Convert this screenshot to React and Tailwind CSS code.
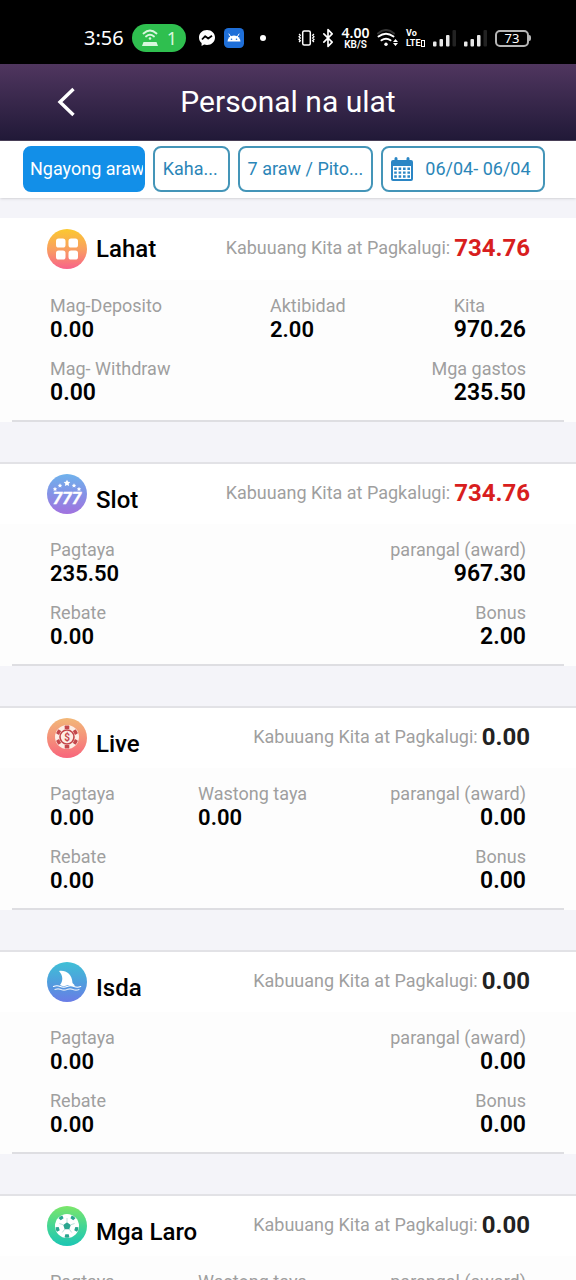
import { useId } from 'react';
import { Bluetooth } from 'lucide-react';

const GROUPS = [
  {
    id: 'all',
    title: 'Lahat',
    total: '734.76',
    rows: [
      [
        { label: 'Mag-Deposito', value: '0.00' },
        { label: 'Aktibidad', value: '2.00' },
        { label: 'Kita', value: '970.26', size: 'lg' },
      ],
      [
        { label: 'Mag- Withdraw', value: '0.00', size: 'lg' },
        { label: 'Mga gastos', value: '235.50', size: 'lg', align: 'right' },
      ],
    ],
  },
  {
    id: 'slot',
    title: 'Slot',
    total: '734.76',
    rows: [
      [
        { label: 'Pagtaya', value: '235.50' },
        { label: 'parangal (award)', value: '967.30', size: 'lg', align: 'right' },
      ],
      [
        { label: 'Rebate', value: '0.00' },
        { label: 'Bonus', value: '2.00', size: 'lg', align: 'right' },
      ],
    ],
  },
  {
    id: 'live',
    title: 'Live',
    total: '0.00',
    rows: [
      [
        { label: 'Pagtaya', value: '0.00' },
        { label: 'Wastong taya', value: '0.00' },
        { label: 'parangal (award)', value: '0.00', size: 'lg', align: 'right' },
      ],
      [
        { label: 'Rebate', value: '0.00' },
        { label: 'Bonus', value: '0.00', size: 'lg', align: 'right' },
      ],
    ],
  },
  {
    id: 'fish',
    title: 'Isda',
    total: '0.00',
    rows: [
      [
        { label: 'Pagtaya', value: '0.00' },
        { label: 'parangal (award)', value: '0.00', size: 'lg', align: 'right' },
      ],
      [
        { label: 'Rebate', value: '0.00' },
        { label: 'Bonus', value: '0.00', size: 'lg', align: 'right' },
      ],
    ],
  },
  {
    id: 'sports',
    title: 'Mga Laro',
    total: '0.00',
    rows: [
      [
        { label: 'Pagtaya', value: '0.00' },
        { label: 'Wastong taya', value: '0.00' },
        { label: 'parangal (award)', value: '0.00', size: 'lg', align: 'right' },
      ],
      [
        { label: 'Rebate', value: '0.00' },
        { label: 'Bonus', value: '0.00', size: 'lg', align: 'right' },
      ],
    ],
  },
];

const ICON_COLORS = {
  all: ['#fbc92f', '#f9a060', '#f8628a'],
  slot: ['#6fb2ec', '#8492e6', '#a172df'],
  live: ['#f2b878', '#f5917a', '#f8657c'],
  fish: ['#3fc0d6', '#4f9fdd', '#6a7ce6'],
  sports: ['#7be66a', '#45d694', '#1cc6b4'],
};

const TILES = [[9, 9.5], [21.5, 9.5], [9, 21.5], [21.5, 21.5]];
const STARS = [[8, 15, 2], [13, 11.5, 2], [20, 9, 3], [27, 11.5, 2], [32, 15, 2]];
const SPOKES = [0, 60, 120, 180, 240, 300];
const PATCHES = [36, 108, 180, 252, 324];

function GroupArt({ id }) {
  if (id === 'all') {
    return TILES.map(([x, y]) => (
      <rect key={`${x}-${y}`} x={x} y={y} width="9.500" height="9" rx="2.600" fill="#fff" />
    ));
  }
  if (id === 'slot') {
    return (
      <g fill="#fff">
        {STARS.map(([x, y, r]) => (
          <path
            key={x}
            transform={`translate(${x} ${y}) scale(${r / 2})`}
            d="M0-2.2 .7-.8 2.2-.6 1.1.5 1.4 2 0 1.3-1.4 2-1.1.5-2.2-.6-.7-.8Z"
          />
        ))}
        <text
          x="20" y="30" textAnchor="middle" fontSize="17" fontWeight="700" fontStyle="italic"
          fontFamily="Roboto, sans-serif" stroke="#fff" strokeWidth=".4"
        >
          777
        </text>
      </g>
    );
  }
  if (id === 'live') {
    return (
      <>
        <circle cx="20" cy="19" r="12" fill="#fdeee6" />
        {SPOKES.map((a) => (
          <rect
            key={a} x="17.7" y="7.6" width="4.6" height="3.4" rx=".6" fill="#c4474b"
            transform={`rotate(${a} 20 19)`}
          />
        ))}
        <circle cx="20" cy="19" r="7" fill="#fdeee6" stroke="#c4474b" strokeWidth="1.6" />
        <text
          x="20" y="22.6" textAnchor="middle" fontSize="10" fontWeight="700"
          fontFamily="Roboto, sans-serif" fill="#c4474b"
        >
          $
        </text>
      </>
    );
  }
  if (id === 'fish') {
    return (
      <>
        <path
          fill="#fff"
          d="M12 9c7-1 13 3 13.5 12l2.500 2.500c-3 .9-5 .9-7-.5-3 1.500-6 1.500-8 0 3-3.500 3.500-9-1-14Z"
        />
        <g fill="none" stroke="#fff" strokeWidth="1.200" strokeLinecap="round">
          <path d="M6.500 24.500q3.400-1.500 6.800 0t6.800 0 6.800 0 6.800 0" />
          <path d="M8 27.500q3-1.400 6 0t6 0 6 0 6 0" opacity=".8" />
        </g>
      </>
    );
  }
  return (
    <>
      <circle cx="20" cy="20" r="12" fill="#fff" />
      <g fill="#2aa58f">
        <path d="M20 16.2 23.7 18.9 22.3 23.2H17.7L16.3 18.9Z" />
        {PATCHES.map((a) => (
          <path key={a} d="M17.6 31.2 18.3 28.2H21.7L22.4 31.2Q20 32.2 17.6 31.2Z" transform={`rotate(${a + 36} 20 20)`} />
        ))}
      </g>
      <g stroke="#2aa58f" strokeWidth=".6" opacity=".5">
        {PATCHES.map((a) => (
          <path key={a} d="M20 24v4" transform={`rotate(${a} 20 20)`} />
        ))}
      </g>
    </>
  );
}

function GroupIcon({ id }) {
  const gradient = useId();
  const [from, mid, to] = ICON_COLORS[id];
  return (
    <svg viewBox="0 0 40 40" className="size-10 shrink-0" aria-hidden="true">
      <defs>
        <linearGradient id={gradient} x1="0" y1="0" x2="0" y2="1">
          <stop offset="0" stopColor={from} />
          <stop offset=".5" stopColor={mid} />
          <stop offset="1" stopColor={to} />
        </linearGradient>
      </defs>
      <circle cx="20" cy="20" r="20" fill={`url(#${gradient})`} />
      <GroupArt id={id} />
    </svg>
  );
}

function Signal() {
  return (
    <svg viewBox="0 0 24 18" className="h-[18px] w-6" fill="#e8e8e8" aria-hidden="true">
      <rect x="0" y="12.500" width="3.500" height="5" rx="1" />
      <rect x="6.500" y="10" width="3.500" height="7.500" rx="1" />
      <rect x="13" y="6" width="3.500" height="11.500" rx="1" />
      <rect x="19.500" y="1" width="3.500" height="16.500" rx="1" fill="#222" />
    </svg>
  );
}

function StatusBar() {
  return (
    <div className="flex h-16 shrink-0 items-center justify-between bg-black pt-3 pr-[45px] pl-[84px] font-['Noto_Sans',sans-serif] text-white">
      <div className="flex items-center gap-2">
        <span className="w-10 text-xl leading-7">3:56</span>
        <span className="flex h-7 w-[54px] items-center justify-center gap-2 rounded-full bg-[#2fbf4f] text-[#d9f7df]">
          <svg viewBox="0 0 18 18" className="size-[18px]" fill="none" stroke="currentColor" strokeWidth="1.800" strokeLinecap="round" aria-hidden="true">
            <path d="M2.500 4.500Q9-1.500 15.500 4.500M5 7.500q4-3.400 8 0" />
            <circle cx="9" cy="9.500" r="1.300" fill="currentColor" stroke="none" />
            <path d="M2.500 13h13l1.500 4H1Z" fill="currentColor" stroke="none" />
          </svg>
          <span className="text-lg leading-6">1</span>
        </span>
        <svg viewBox="0 0 18 18" className="ml-1 size-[18px]" aria-hidden="true">
          <path fill="#fff" d="M9 1C4.400 1 1 4.300 1 8.500c0 2.300 1 4.200 2.600 5.600V17l2.500-1.400c.9.3 1.900.4 2.900.4 4.600 0 8-3.300 8-7.500S13.600 1 9 1Z" />
          <path fill="none" stroke="#000" strokeWidth="1.800" strokeLinejoin="round" d="m4 10.500 3.200-3.400 3 2.400L14 6.800" />
        </svg>
        <svg viewBox="0 0 20 20" className="size-5" aria-hidden="true">
          <rect width="20" height="20" rx="4.500" fill="#1f6fd8" />
          <path fill="#fff" d="M3.500 13.500a6.500 6 0 0 1 13 0Z" />
          <path stroke="#fff" strokeWidth="1" strokeLinecap="round" d="m5 6 1.800 3M15 6l-1.800 3" />
          <circle cx="7.500" cy="11.300" r=".8" fill="#1f6fd8" />
          <circle cx="12.500" cy="11.300" r=".8" fill="#1f6fd8" />
        </svg>
        <span className="ml-2 size-1.5 rounded-full bg-white" />
      </div>

      <div className="flex items-center gap-[7px]">
        <svg viewBox="0 0 17 18" className="h-[18px] w-[17px]" fill="none" stroke="#fff" strokeWidth="1.500" aria-hidden="true">
          <rect x="4.700" y="2" width="7.600" height="14" rx="1.500" />
          <path strokeWidth="1.200" d="m1 5 1.400 1.300L1 7.700l1.400 1.300L1 10.400l1.400 1.300L1 13M16 5l-1.400 1.300L16 7.700 14.600 9 16 10.400l-1.400 1.300L16 13" />
        </svg>
        <span className="flex w-3 justify-center">
          <Bluetooth size={20} strokeWidth={2} className="shrink-0" />
        </span>
        <span className="flex w-[29px] flex-col items-center font-semibold">
          <span className="text-sm leading-[14px]">4.00</span>
          <span className="font-[Roboto,sans-serif] text-[10px] leading-[10px]">KB/S</span>
        </span>
        <svg viewBox="0 0 22 18" className="h-[18px] w-[22px]" fill="none" stroke="#fff" strokeWidth="2" strokeLinecap="round" aria-hidden="true">
          <path stroke="#333" d="M1 4.500Q9-2.500 17 4.500" />
          <path d="M1.500 7.500q7.500-5.600 15 0M4.500 11.300q4.500-3.200 9 0" />
          <circle cx="9" cy="15.200" r="1.700" fill="#fff" stroke="none" />
          <path fill="#fff" stroke="none" d="m18.500 10 2.500 3h-5ZM18.500 17l2.500-3h-5Z" />
        </svg>
        <span className="flex w-5 flex-col font-[Roboto,sans-serif] text-[9px] leading-[10px] font-bold">
          <span>Vo</span>
          <span className="flex items-center">
            LTE
            <span className="h-[7px] w-1 shrink-0 border border-white" />
          </span>
        </span>
        <Signal />
        <Signal />
        <span className="flex w-9 items-center">
          <span className="flex h-[17px] w-[34px] items-center justify-center rounded-[5px] border-2 border-[#b5b5b5] text-[13px] leading-3">73</span>
          <span className="h-1.5 w-0.5 rounded-r-sm bg-[#b5b5b5]" />
        </span>
      </div>
    </div>
  );
}

function Header() {
  return (
    <header className="grid h-[77px] shrink-0 grid-cols-[1fr_auto_1fr] items-center border-b border-[#4b4159] bg-linear-to-b from-[#50365f] to-[#211938] text-white">
      <button type="button" aria-label="Back" className="ml-14 w-5">
        <svg viewBox="0 0 20 30" className="h-[30px] w-5" fill="none" stroke="currentColor" strokeWidth="3.400" aria-hidden="true">
          <path d="M17.500 2 4 15l13.500 13" />
        </svg>
      </button>
      <h1 className="text-[30px] leading-9">Personal na ulat</h1>
    </header>
  );
}

function CalendarIcon() {
  return (
    <svg viewBox="0 0 22 24" className="h-6 w-[22px] shrink-0" aria-hidden="true">
      <path fill="#2b86c5" d="M2 3h1.500V1.500a1.500 1.500 0 0 1 3 0V3h9V1.500a1.500 1.500 0 0 1 3 0V3H20a2 2 0 0 1 2 2v17a2 2 0 0 1-2 2H2a2 2 0 0 1-2-2V5a2 2 0 0 1 2-2Z" />
      <path fill="#fff" d="M2 9h18v13H2Z" />
      <path stroke="#2b86c5" strokeWidth="2.400" strokeDasharray="2.600 1.800" d="M3.200 11.700h16M3.200 15.600h16M3.200 19.500h16" />
    </svg>
  );
}

const CHIP = 'h-[46px] min-w-0 overflow-hidden rounded-lg border-2 text-left text-lg leading-6 whitespace-nowrap';
const CHIP_IDLE = 'border-[#4495b8] bg-white pl-2 text-[#2b86b8]';

function Filters() {
  return (
    <nav className="grid h-[57px] shrink-0 grid-cols-[122fr_77fr_136fr_164fr] items-start gap-2 bg-white pt-[5px] pr-[31px] pl-[23px] shadow-sm">
      <button type="button" className={`${CHIP} border-[#128fe8] bg-[#128fe8] pl-[5px] text-white`}>
        Ngayong araw
      </button>
      <button type="button" className={`${CHIP} ${CHIP_IDLE}`}>Kaha...</button>
      <button type="button" className={`${CHIP} ${CHIP_IDLE}`}>7 araw / Pito...</button>
      <button type="button" className={`${CHIP} ${CHIP_IDLE} flex items-center gap-3`}>
        <CalendarIcon />
        06/04- 06/04
      </button>
    </nav>
  );
}

function Stat({ label, value, size, align }) {
  return (
    <div className={align === 'right' ? 'text-right' : 'text-left'}>
      <dt className="text-lg leading-6 text-[#9f9f9f]">{label}</dt>
      <dd className={`leading-6 font-semibold text-black ${size === 'lg' ? 'text-[23px]' : 'text-[22px]'}`}>
        {value}
      </dd>
    </div>
  );
}

function GroupCard({ group, first }) {
  const isPositive = Number(group.total) > 0;
  return (
    <section className={first ? 'bg-[#fdfdfd]' : 'border-t-2 border-[#e2e2e6] bg-[#fdfdfd]'}>
      <div className={`flex items-start justify-between bg-white pr-[46px] pl-[47px] ${first ? 'h-[62px] pt-[11px]' : 'h-[60px] pt-[10px]'}`}>
        <div className="flex items-start gap-[9px]">
          <GroupIcon id={group.id} />
          <h2 className={`text-2xl leading-8 font-medium text-black ${first ? 'pt-1' : 'pt-[10px]'}`}>
            {group.title}
          </h2>
        </div>
        <p className="flex items-center gap-1 pt-[5px] text-lg leading-7 text-[#9f9f9f]">
          Kabuuang Kita at Pagkalugi:
          <strong className={`text-2xl leading-7 font-bold ${isPositive ? 'text-[#d81e1e]' : 'text-[#222]'}`}>
            {group.total}
          </strong>
        </p>
      </div>

      <div className="mx-3 flex flex-col gap-[15px] border-b-2 border-[#dedee2] px-[38px] pt-[14px] pb-[15px]">
        {group.rows.map((row, i) => (
          <dl key={i} className="flex justify-between">
            {row.map((stat) => (
              <Stat key={stat.label} {...stat} />
            ))}
          </dl>
        ))}
      </div>
    </section>
  );
}

export default function App() {
  return (
    <div className="flex h-screen flex-col overflow-hidden bg-[#f4f4f9] font-[Roboto,sans-serif]">
      <StatusBar />
      <Header />
      <Filters />
      <main className="flex min-h-0 flex-1 flex-col gap-10 overflow-y-auto pt-5 [scrollbar-width:none]">
        {GROUPS.map((group, i) => (
          <GroupCard key={group.id} group={group} first={i === 0} />
        ))}
      </main>
    </div>
  );
}
